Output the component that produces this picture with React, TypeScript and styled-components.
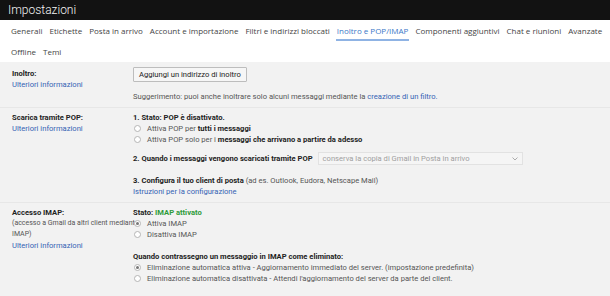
import styled, { createGlobalStyle } from "styled-components";

const GlobalStyle = createGlobalStyle`
  html, body { margin: 0; padding: 0; background: #f2f2f2; }
  body { font-family: Roboto, "Liberation Sans", Arial, sans-serif; }
`;

// Top black bar
const Header = styled.div`
  height: 20px;
  background: #121212;
  color: #f4f4f4;
  font-size: 12px;
  font-weight: 300;
  line-height: 20px;
  padding-left: 8px;
  font-family: Roboto, Arial, sans-serif;
`;

// Tabs
const TabBar = styled.div`
  background: #fff;
  padding: 0 0 0 10px;
  font-family: "Open Sans", Roboto, sans-serif;
  font-size: 8px;
  color: #444;
`;
const TabRow = styled.div`
  display: flex;
  gap: 5px;
  height: 21px;
`;
const Tab = styled.div<{ active?: boolean }>`
  line-height: 21px;
  padding: 0 1px;
  color: ${(p) => (p.active ? "#3b78c8" : "#444")};
  border-bottom: 2px solid ${(p) => (p.active ? "#8fb3e4" : "transparent")};
  height: 19px;
  white-space: nowrap;
`;

// Content
const Content = styled.div`
  background: #f2f2f2;
  font-size: 7.6px;
  color: #222;
`;
const Section = styled.div<{ last?: boolean; top?: number }>`
  display: grid;
  grid-template-columns: 121px 1fr;
  padding: ${(p) => p.top ?? 4}px 0 5px 12px;
  border-bottom: ${(p) => (p.last ? "none" : "1px solid #e7e7e7")};
`;
const Label = styled.div<{ offset?: number }>`
  line-height: 11px;
  white-space: nowrap;
  padding-top: ${(p) => p.offset ?? 0}px;
`;
const LabelTitle = styled.div`
  font-weight: 700;
`;
const Note = styled.div`
  color: #555;
  font-size: 7px;
`;
const Link = styled.a`
  color: #3563b4;
  text-decoration: none;
  display: inline;
`;
const Body = styled.div`
  line-height: 11px;
`;
const Block = styled.div<{ gap?: number }>`
  margin-top: ${(p) => p.gap ?? 0}px;
`;
const Line = styled.div`
  display: flex;
  align-items: center;
  gap: 3px;
  white-space: nowrap;
`;
const Strong = styled.b`
  font-weight: 700;
  color: #222;
`;
const Green = styled.span`
  color: #2e9a3a;
  font-weight: 700;
`;
const Plain = styled.span`
  color: #555;
`;
const Button = styled.div`
  height: 13px;
  width: fit-content;
  line-height: 13px;
  padding: 0 5px;
  border: 1px solid #bdbdbd;
  background: #f6f6f6;
  border-radius: 1px;
  color: #222;
`;
const Select = styled.div`
  display: flex;
  align-items: center;
  justify-content: space-between;
  width: 195px;
  height: 11px;
  padding: 0 4px;
  margin-left: 2px;
  border: 1px solid #e2e2e2;
  background: #f5f5f5;
  color: #a0a0a0;
`;
const RadioCircle = styled.span<{ checked?: boolean }>`
  width: 5px;
  height: 5px;
  border-radius: 50%;
  border: 1px solid #b5b5b5;
  background: #fff;
  display: inline-flex;
  align-items: center;
  justify-content: center;
  margin: 0 3px 0 1px;
  &::after {
    content: "";
    width: 3px;
    height: 3px;
    border-radius: 50%;
    background: ${(p) => (p.checked ? "#777" : "transparent")};
  }
`;

const Radio = ({ checked, children }: { checked?: boolean; children: React.ReactNode }) => (
  <Line>
    <RadioCircle checked={checked} />
    <Plain>{children}</Plain>
  </Line>
);

const tabs1 = [
  "Generali",
  "Etichette",
  "Posta in arrivo",
  "Account e importazione",
  "Filtri e indirizzi bloccati",
  "Inoltro e POP/IMAP",
  "Componenti aggiuntivi",
  "Chat e riunioni",
  "Avanzate",
];

export default function App() {
  return (
    <>
      <GlobalStyle />
      <Header>Impostazioni</Header>
      <TabBar>
        <TabRow>
          {tabs1.map((t) => (
            <Tab key={t} active={t === "Inoltro e POP/IMAP"}>
              {t}
            </Tab>
          ))}
        </TabRow>
        <TabRow>
          <Tab>Offline</Tab>
          <Tab>Temi</Tab>
        </TabRow>
      </TabBar>
      <Content>
        <Section top={5}>
          <Label offset={1}>
            <LabelTitle>Inoltro:</LabelTitle>
            <Link>Ulteriori informazioni</Link>
          </Label>
          <Body>
            <Button>Aggiungi un indirizzo di inoltro</Button>
            <Block gap={9}>
              <Plain>
                Suggerimento: puoi anche inoltrare solo alcuni messaggi mediante la{" "}
              </Plain>
              <Link>creazione di un filtro.</Link>
            </Block>
          </Body>
        </Section>
        <Section>
          <Label>
            <LabelTitle>Scarica tramite POP:</LabelTitle>
            <Link>Ulteriori informazioni</Link>
          </Label>
          <Body>
            <Strong>1. Stato: POP è disattivato.</Strong>
            <Radio>
              Attiva POP per <Strong>tutti i messaggi</Strong>
            </Radio>
            <Radio>
              Attiva POP solo per i <Strong>messaggi che arrivano a partire da adesso</Strong>
            </Radio>
            <Block gap={7}>
              <Line>
                <Strong>2. Quando i messaggi vengono scaricati tramite POP</Strong>
                <Select>
                  <span>conserva la copia di Gmail in Posta in arrivo</span>
                  <svg width="6" height="4" viewBox="0 0 6 4">
                    <path d="M0.5 0.5 L3 3 L5.5 0.5" stroke="#999" fill="none" strokeWidth="0.8" />
                  </svg>
                </Select>
              </Line>
            </Block>
            <Block gap={10}>
              <div>
                <Strong>3. Configura il tuo client di posta</Strong>{" "}
                <Plain>(ad es. Outlook, Eudora, Netscape Mail)</Plain>
              </div>
              <Link>Istruzioni per la configurazione</Link>
            </Block>
          </Body>
        </Section>
        <Section last>
          <Label>
            <LabelTitle>Accesso IMAP:</LabelTitle>
            <Note>(accesso a Gmail da altri client mediante</Note>
            <Note>IMAP)</Note>
            <Link>Ulteriori informazioni</Link>
          </Label>
          <Body>
            <div>
              <Strong>Stato: </Strong>
              <Green>IMAP attivato</Green>
            </div>
            <Radio checked>Attiva IMAP</Radio>
            <Radio>Disattiva IMAP</Radio>
            <Block gap={11}>
              <Strong>Quando contrassegno un messaggio in IMAP come eliminato:</Strong>
              <Radio checked>
                Eliminazione automatica attiva - Aggiornamento immediato del server. (impostazione predefinita)
              </Radio>
              <Radio>
                Eliminazione automatica disattivata - Attendi l'aggiornamento del server da parte del client.
              </Radio>
            </Block>
          </Body>
        </Section>
      </Content>
    </>
  );
}
